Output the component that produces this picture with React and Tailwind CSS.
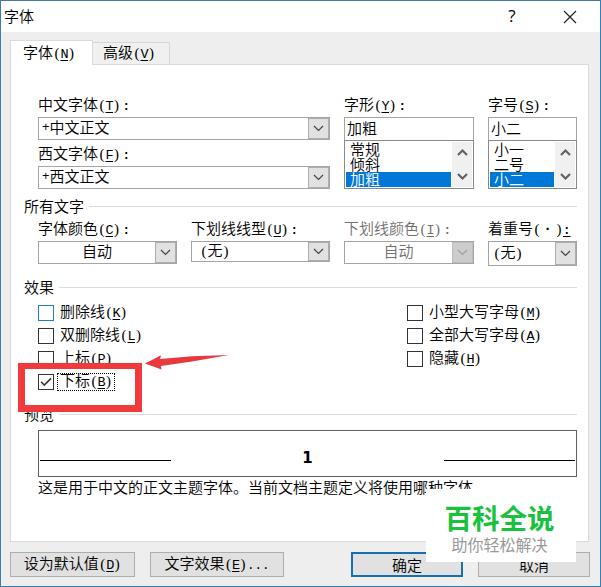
import React from "react";

// Latin glyphs sit on a 7.5px grid beside 15px CJK glyphs.
function Mono({ children, className = "" }) {
  return (
    <span className={"font-['Liberation_Mono','Noto_Sans_CJK_SC',monospace] text-[12.5px] " + className}>
      {children}
    </span>
  );
}

function Paren({ open = false }) {
  return (
    <span
      className={
        "inline-block w-[7.5px] font-['Liberation_Serif',serif] text-[15px] leading-5 " +
        (open ? "pr-px text-right" : "pl-px text-left")
      }
    >
      {open ? "(" : ")"}
    </span>
  );
}

function None() {
  return (
    <span>
      <Paren open />无<Paren />
    </span>
  );
}

function Label({ text, k, tail = "", className = "" }) {
  return (
    <span className={"whitespace-pre text-[15px] leading-5 " + className}>
      {text}
      {k && (
        <>
          <Paren open />
          <Mono className="text-[13.5px]! tracking-[-0.6px] underline underline-offset-2">{k}</Mono>
          <Paren />
        </>
      )}
      {tail && <Mono className={tail === ":" ? "pl-[2px] font-bold" : ""}>{tail}</Mono>}
    </span>
  );
}

function FieldLabel(props) {
  return (
    <div className="-mt-px h-[23px]">
      <Label {...props} />
    </div>
  );
}

function Chevron({ up = false, thick = false, color = "#444" }) {
  return (
    <svg width="11" height="7" viewBox="0 0 11 7" fill="none" stroke={color} strokeWidth={thick ? 2.1 : 1.2}>
      <path d={up ? "M1 6 L5.5 1.5 L10 6" : "M1 1 L5.5 5.5 L10 1"} />
    </svg>
  );
}

function Combo({ className = "", valueClass = "pl-[3px]", disabled = false, children }) {
  return (
    <div className={"flex border border-[#a5a5a5] bg-white " + className}>
      <div className={"flex flex-1 items-center pb-[3px] whitespace-pre " + valueClass}>{children}</div>
      <div
        className={
          "flex w-[21px] items-center justify-center border " +
          (disabled ? "border-[#bdbdbd] bg-[#cccccc]" : "border-[#adadad] bg-[#e1e1e1]")
        }
      >
        <Chevron color={disabled ? "#a0a0a0" : "#444"} />
      </div>
    </div>
  );
}

function ListBox({ items, rowClass }) {
  return (
    <div className="-mt-px flex h-[49px] border border-[#8a8a8a] bg-white p-px">
      <div className={"flex flex-col " + rowClass}>
        {items.map((t, i) => (
          <div
            key={t}
            className={"h-[15px] pl-1 leading-[13px] " + (i === 2 ? "bg-[#0078d7] text-white" : "")}
          >
            {t}
          </div>
        ))}
      </div>
      <div className="ml-px flex flex-1 flex-col items-center justify-between bg-[#f0f0f0] pt-[7px] pb-[7px]">
        <Chevron up thick color="#606060" />
        <Chevron thick color="#606060" />
      </div>
    </div>
  );
}

function Section({ title }) {
  return (
    <div className="flex h-5 items-center gap-[5px] pl-[13px]">
      <span className="pb-px whitespace-nowrap">{title}</span>
      <span className="mr-[11px] h-px flex-1 bg-[#dcdcdc]" />
    </div>
  );
}

function Check({ text, k, border = "border-[#333]", checked = false }) {
  return (
    <div className="flex h-[23px] items-center">
      <span className={"flex h-4 w-4 items-center justify-center border " + border}>
        {checked && (
          <svg width="12" height="10" viewBox="0 0 12 10" fill="none" stroke="#333" strokeWidth="1.5">
            <path d="M1 4.8 L4.3 8.1 L11 1.4" />
          </svg>
        )}
      </span>
      <span
        className={
          "flex items-center " +
          (checked ? "ml-[3px] h-[18px] w-[58px] border border-dotted border-black pl-[2px]" : "ml-[6px] h-[20px]")
        }
      >
        <Label text={text} k={k} />
      </span>
    </div>
  );
}

function Button({ className, children }) {
  return (
    <div className={"flex h-[25px] items-center justify-center bg-[#e1e1e1] " + className}>{children}</div>
  );
}

export default function App() {
  return (
    <div className="relative flex h-[587px] w-[601px] flex-col overflow-hidden border border-t-[#477998] border-r-[#2783c5] border-b-[#2d80bd] border-l-[#3f7ca7] bg-[#eeeeee] font-['Noto_Sans_CJK_SC',sans-serif] text-[15px] leading-5 font-[350] text-black">
      <header className="flex h-[31px] shrink-0 items-center bg-white pl-[3px]">
        <span className="flex-1 pb-[2px]">字体</span>
        <span className="w-[10px] pb-px text-center font-['Open_Sans',sans-serif] text-[17px] font-normal">?</span>
        <svg className="mr-[23px] ml-[46px]" width="14" height="14" viewBox="0 0 14 14" stroke="#222" strokeWidth="1.2">
          <path d="M1 1 L13 13 M13 1 L1 13" />
        </svg>
      </header>

      <nav className="flex h-[32px] shrink-0 items-end pl-[9px]">
        <div className="z-10 -mb-px flex h-[25px] w-[83px] items-center border border-b-0 border-[#dadada] bg-white pl-[12px]">
          <Label text="字体" k="N" />
        </div>
        <div className="flex h-[22px] w-[77px] items-center border border-b-0 border-l-0 border-[#d6d6d6] bg-[#f0f0f0] pl-[10px]">
          <Label text="高级" k="V" />
        </div>
      </nav>

      <main className="ml-[9px] flex h-[478px] w-[579px] shrink-0 flex-col border border-[#dadada] bg-white">
        <div className="mt-[30px] flex gap-[14px] pl-[27px]">
          <div className="flex w-[292px] flex-col">
            <FieldLabel text="中文字体" k="T" tail=":" />
            <Combo className="h-[23px]"><Mono className="pt-px">+</Mono>中文正文</Combo>
            <div className="h-[4px]" />
            <FieldLabel text="西文字体" k="F" tail=":" />
            <Combo className="h-[23px]"><Mono className="pt-px">+</Mono>西文正文</Combo>
          </div>
          <div className="flex w-[130px] flex-col">
            <FieldLabel text="字形" k="Y" tail=":" />
            <div className="flex h-[24px] items-center border border-[#a5a5a5] pb-[3px] pl-[2px]">加粗</div>
            <ListBox items={["常规", "倾斜", "加粗"]} rowClass="w-[105px]" />
          </div>
          <div className="flex w-[89px] flex-col">
            <FieldLabel text="字号" k="S" tail=":" />
            <div className="flex h-[24px] items-center border border-[#a5a5a5] pb-[3px] pl-[2px]">小二</div>
            <ListBox items={["小一", "二号", "小二"]} rowClass="w-[64px]" />
          </div>
        </div>

        <div className="mt-[7px]"><Section title="所有文字" /></div>
        <div className="mt-[3px] flex h-[47px] gap-[14px] pl-[27px]">
          <div className="flex w-[139px] flex-col">
            <FieldLabel text="字体颜色" k="C" tail=":" />
            <Combo className="h-[23px]" valueClass="justify-center">自动</Combo>
          </div>
          <div className="flex w-[139px] flex-col">
            <FieldLabel text="下划线线型" k="U" tail=":" />
            <Combo className="h-[21px]" valueClass="pl-[8px]"><None /></Combo>
          </div>
          <div className="flex w-[130px] flex-col text-[#707070]">
            <FieldLabel text="下划线颜色" k="I" tail=":" />
            <Combo className="h-[23px]" valueClass="justify-center" disabled>自动</Combo>
          </div>
          <div className="flex w-[89px] flex-col">
            <div className="-mt-px h-[23px] whitespace-nowrap">
              着重号<Paren open />
              <span className="inline-block w-[15px] text-center font-['Liberation_Sans',sans-serif] font-bold">·</span>
              <Paren />
              <Mono className="font-bold underline underline-offset-2">:</Mono>
            </div>
            <Combo className="h-[25px]" valueClass="pl-[4px]"><None /></Combo>
          </div>
        </div>

        <div className="mt-[11px]"><Section title="效果" /></div>
        <div className="mt-[4px] flex pl-[27px]">
          <div className="w-[369px]">
            <Check text="删除线" k="K" border="border-[#2080be]" />
            <Check text="双删除线" k="L" />
            <Check text="上标" k="P" />
            <Check text="下标" k="B" checked />
          </div>
          <div>
            <Check text="小型大写字母" k="M" />
            <Check text="全部大写字母" k="A" />
            <Check text="隐藏" k="H" />
          </div>
        </div>

        <div className="mt-[11px]"><Section title="预览" /></div>
        <div className="mt-[6px] ml-[27px] flex h-[47px] w-[539px] items-center justify-between border border-[#606060] px-px pt-[13px]">
          <span className="h-px w-[131px] bg-black" />
          <span className="-mt-[5px] font-['DejaVu_Sans',sans-serif] text-[15px] font-bold">1</span>
          <span className="h-px w-[131px] bg-black" />
        </div>
        <p className="ml-[27px] whitespace-nowrap">这是用于中文的正文主题字体。当前文档主题定义将使用哪种字体</p>
      </main>

      <footer className="mt-[10px] flex shrink-0 pl-[9px]">
        <Button className="w-[125px] border border-[#adadad]"><Label text="设为默认值" k="D" /></Button>
        <Button className="ml-[15px] w-[134px] border border-[#adadad]"><Label text="文字效果" k="E" tail="..." /></Button>
        <Button className="ml-[67px] w-[112px] border-2 border-[#1670b0]">确定</Button>
        <Button className="ml-[15px] w-[112px] border border-[#adadad]">取消</Button>
      </footer>

      {/* Highlight frame and arrow drawn over the dialog */}
      <div className="absolute top-[362px] left-[17px] h-[49px] w-[124px] border-[7px] border-t-[6px] border-[#f03a3c]" />
      <svg className="absolute top-[350px] left-[142px]" width="90" height="24" viewBox="143 351 90 24">
        <path d="M145 363.5 L161 355.3 L160 359 L192 356.3 L229 355 L192 361.5 L161 366 L161.5 369.5 Z" fill="#e83a3e" />
      </svg>

      {/* Site badge */}
      <div className="absolute top-[488px] left-[425px] flex h-[73px] w-[150px] flex-col items-center bg-white pr-[3px]">
        <span className="mt-[12px] text-[27.5px] leading-8 font-bold text-[#18c23c]">百科全说</span>
        <span className="mt-px text-[16px] leading-5 font-normal text-[#999]">助你轻松解决</span>
      </div>
    </div>
  );
}
